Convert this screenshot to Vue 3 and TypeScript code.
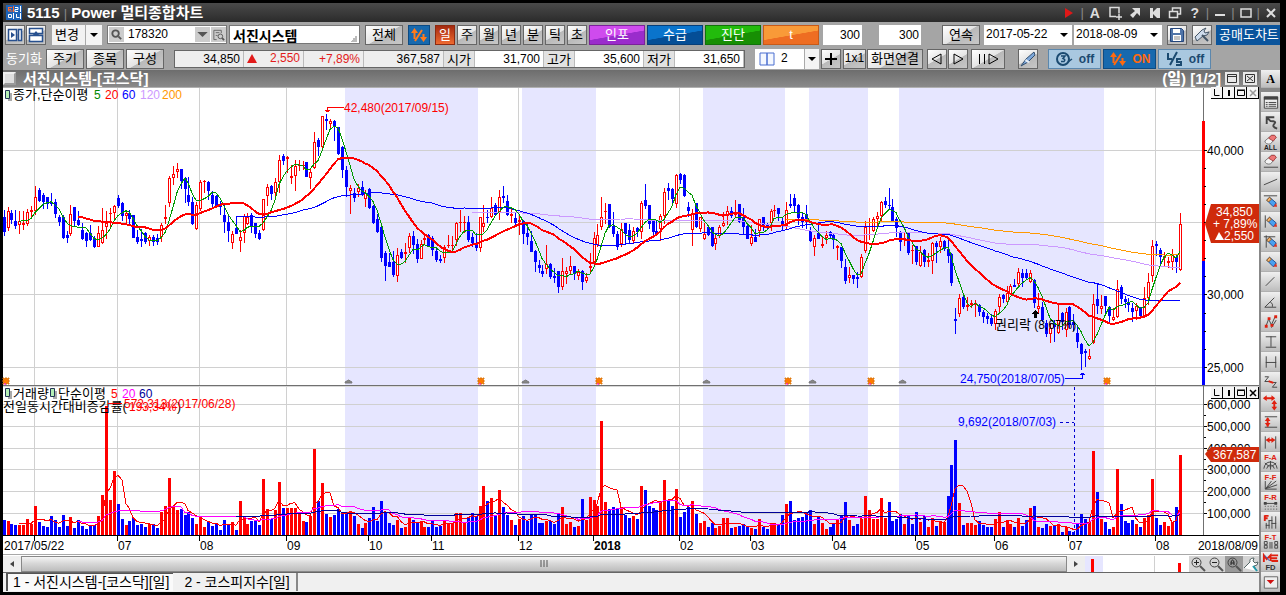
<script setup lang="ts">
import { ref } from 'vue'

interface Part { d: string; s?: string; f?: string; w?: number }
interface Tool { label: string; parts: Part[]; text?: string; color?: string; ty?: number; size?: number }

const STEP = 3.9331
const BASE = 535
const px = (i: number): number => Math.floor(4.1 + STEP * i)

/* direction, high, body top, body bottom, low */
const candleRows = `
b 210 217 232 236|r 207 211 228 231|b 210 213 220 224|b 210 221 226 229|r 211 221 225 234|r 211 223 225 230|r 209 212 224 226|r 206 210 212 217|r 186 197 211 215|b 188 190 201 202
b 193 195 202 209|b 197 197 204 209|b 193 202 204 206|b 199 202 214 218|b 215 217 222 226|b 215 217 238 239|b 231 235 238 243|r 205 214 234 236|b 207 207 221 226|b 211 220 225 226
b 223 230 239 240|b 232 233 241 247|b 225 233 240 241|b 236 239 247 248|r 226 233 247 247|r 208 230 243 244|r 211 223 227 239|r 208 213 214 228|r 205 206 213 219|b 195 198 206 208
b 202 203 216 221|r 210 213 216 224|b 210 213 219 224|b 215 215 238 238|b 230 237 242 244|b 229 239 241 247|b 232 233 242 244|r 235 237 241 246|b 235 237 242 246|b 234 238 242 245
r 223 225 237 242|r 205 217 219 224|r 176 178 203 207|r 166 174 178 185|r 163 169 172 178|b 169 169 181 189|b 177 178 189 203|b 177 195 202 206|b 197 202 224 225|r 202 205 229 230
r 180 182 209 211|r 180 181 182 193|b 181 182 191 200|b 191 195 204 207|b 195 196 207 207|b 201 204 207 215|b 205 215 222 233|b 215 222 231 242|r 231 234 243 249|b 217 228 234 234
r 230 237 241 252|r 214 216 233 243|r 213 217 224 225|b 213 215 226 233|b 223 223 234 238|b 230 233 239 240|r 199 199 230 231|r 184 187 196 206|b 185 186 194 200|r 178 182 193 200
r 155 160 182 193|b 154 156 161 165|r 156 157 159 173|r 165 176 178 184|r 160 166 176 191|r 160 165 166 171|r 161 165 166 170|b 162 162 177 177|r 169 172 178 189|r 132 142 168 169
b 138 140 147 156|r 116 116 147 151|b 114 119 121 130|r 119 121 124 129|b 120 121 127 141|b 127 127 154 155|b 146 147 170 178|b 166 170 187 197|r 185 188 191 214|b 188 193 198 202
r 184 188 192 197|b 181 187 195 196|r 190 193 199 207|b 188 189 208 209|b 205 206 223 224|b 214 219 232 233|b 227 227 258 262|b 251 253 266 281|b 253 262 267 267|b 251 262 275 277
r 248 255 276 282|b 249 252 258 259|r 243 252 254 263|r 233 236 248 253|b 231 236 245 254|b 239 244 259 263|r 240 244 259 259|r 233 238 240 244|b 234 235 246 247|b 236 238 250 256
b 247 251 260 262|b 255 259 261 263|r 245 247 258 263|r 235 245 246 248|r 236 245 246 252|r 222 223 240 246|r 210 222 223 232|r 216 222 223 233|b 216 222 240 242|b 233 237 243 247
b 233 245 248 251|r 217 217 248 252|r 205 223 227 232|b 210 217 218 223|r 197 208 217 218|b 203 205 215 216|r 190 197 213 220|b 186 196 198 203|b 195 201 215 216|r 209 214 216 223
b 213 218 223 226|r 214 220 222 235|b 220 221 234 244|b 223 233 237 245|b 231 241 252 252|b 250 251 262 272|b 260 265 268 273|b 265 271 274 277|r 245 264 269 274|b 263 264 277 279
b 268 276 278 283|b 271 271 287 293|r 258 271 287 290|r 267 271 274 284|r 256 266 271 275|b 266 266 274 280|r 269 272 276 280|b 270 271 282 290|r 273 277 281 283|r 253 266 268 273
r 232 238 262 263|r 224 235 245 247|r 197 217 227 230|r 203 211 212 224|b 204 204 227 228|b 212 226 234 237|b 231 234 247 250|r 223 229 244 247|b 223 223 234 244|b 224 230 240 244
r 227 231 241 243|b 227 228 232 237|r 201 203 232 239|b 184 200 206 209|b 205 205 224 229|b 220 221 232 237|b 221 231 234 236|r 214 216 229 241|r 188 192 216 224|b 183 188 191 200
b 188 189 199 205|r 174 175 204 208|b 173 174 180 184|b 174 175 196 197|b 202 207 211 217|r 209 214 230 246|b 203 203 227 228|r 217 217 229 232|r 223 234 239 240|b 225 227 235 236
b 227 227 246 247|r 234 238 244 250|r 225 227 236 238|r 212 223 226 227|r 206 211 216 225|b 207 211 216 218|r 200 213 215 217|b 204 204 222 223|b 208 217 227 234|b 225 226 239 239
r 225 237 244 246|b 229 237 242 242|r 219 219 231 237|b 217 217 225 231|b 223 224 228 230|r 209 211 223 231|r 205 210 211 217|b 208 208 214 221|b 218 221 226 231|r 202 210 226 230
b 194 204 206 208|b 194 198 206 212|b 204 205 218 225|b 212 217 222 228|b 205 214 220 229|b 227 231 241 242|r 235 238 247 256|b 225 233 239 239|r 237 244 246 248|r 231 235 238 244
b 231 232 236 239|b 234 235 240 249|r 245 246 248 260|b 247 247 261 268|b 259 267 281 284|r 267 275 278 283|b 275 275 279 284|b 272 277 279 288|r 254 257 277 278|r 221 227 251 253
r 218 226 227 240|r 217 219 231 232|r 212 216 219 228|r 201 202 216 222|b 197 201 205 208|b 188 205 206 209|b 199 207 222 222|b 217 219 228 237|b 231 233 242 251|r 232 238 240 246
b 233 233 253 255|r 245 250 251 264|b 246 246 262 265|r 246 252 266 267|b 249 250 262 267|r 253 260 262 267|r 242 243 261 274|b 241 243 247 263|r 237 241 247 253|b 240 241 249 251
b 237 249 256 263|b 253 254 283 286|b 308 319 321 334|r 294 298 314 317|b 296 297 307 309|r 297 305 307 311|r 300 303 305 308|r 300 303 305 317|b 304 305 312 316|b 310 312 317 323
b 313 316 319 324|b 314 318 324 326|r 309 311 324 330|r 294 297 307 314|b 294 295 299 303|r 286 293 302 304|r 284 286 294 295|b 279 285 287 287|r 268 272 284 288|b 269 273 278 287
b 269 273 278 279|r 270 273 282 283|b 279 280 303 308|r 293 306 309 314|b 302 307 320 322|b 320 323 334 337|r 323 328 334 343|b 320 323 327 342|r 303 320 333 334|b 312 313 322 330
r 308 312 330 337|b 306 307 325 328|b 314 322 325 331|b 326 333 342 348|b 343 344 354 370|b 349 351 353 367|r 349 356 359 360|r 294 304 343 344|b 283 299 306 314|r 295 306 309 314
b 296 296 306 314|b 306 307 316 323|r 308 317 320 321|r 280 289 317 318|b 285 287 299 304|b 296 299 302 308|b 298 303 305 312|b 303 308 312 322|r 303 306 311 320|b 307 308 316 318
r 287 298 316 317|r 273 282 298 305|r 240 246 276 282|b 241 244 246 256|b 248 250 257 266|r 252 256 258 266|r 257 261 263 268|r 249 255 262 270|b 255 257 262 273|r 213 224 270 271`

const candles = candleRows.trim().split(/[|\n]/).map((row) => {
  const [dir, h, t, b, l] = row.split(' ')
  return { up: dir === 'r', high: +h, top: +t, bottom: +b, low: +l }
})

/* bar heights; a negative value is a falling-price day */
const volumes = `-15 14 -11 -10 10 10 16 11 29 -13 -9 -8 -19 -15 -8 -20 -9 18 -7 -15 -9 -6 -9 -10 19 40 129 35 64 -31
-16 10 -14 -17 -10 -11 -8 11 -11 -7 23 29 57 28 25 -26 -20 -23 -17 11 18 8 -14 -9 -11 -5 -15 -11 13 -5
34 18 11 -14 -14 -10 56 26 -16 25 53 -27 27 27 27 21 14 -13 19 86 -34 52 -21 18 -20 -26 -22 -23 24 -19
11 -7 12 -17 -28 -14 -34 -23 -12 -10 15 -7 8 18 -15 -12 13 8 -8 -15 -8 -9 15 12 12 22 22 12 -18 -22
-19 29 49 -34 37 -20 45 -28 -20 15 -10 16 -19 -14 -21 -20 -12 -12 14 -14 -11 -21 28 11 13 -8 9 -36 15 38
35 29 114 33 -26 -28 -26 28 -20 -17 19 -16 49 -45 -29 -27 -25 34 55 -34 -29 46 -18 -23 -28 34 -21 12 14 -8
-12 7 9 17 17 -7 8 -9 -11 -8 7 -6 16 -8 -6 12 12 -11 -20 31 -34 -15 -17 -18 -22 -25 11 -19 12 6
-8 -12 16 -20 -33 15 -9 -11 16 39 25 16 16 37 17 -33 -14 -16 -21 11 -20 -11 -23 13 -19 8 17 -9 14 13
-39 -70 -95 32 -10 12 12 10 -14 -10 -8 -8 16 23 -8 15 11 -8 17 -9 -15 27 -29 8 -7 -11 9 -10 11 -3
8 -4 -3 -11 -21 -16 13 84 -43 16 -13 -6 8 66 -31 -14 -12 -15 11 -8 17 20 56 -17 -10 13 9 12 -28 80`
  .trim().split(/\s+/).map(Number)

const rect = (x: number, y: number, w: number, h: number): string => `M${x} ${y}h${w}v${h}h${-w}z`

const candlePath = (up: boolean): string =>
  candles.map((c, i) => c.up !== up ? '' :
    rect(px(i), c.high, 1, Math.max(1, c.low - c.high)) + rect(px(i) - 1, c.top, 3, Math.max(1, c.bottom - c.top))).join('')
const hollow = candles.map((c, i) => c.up && c.bottom - c.top > 2 ? rect(px(i), c.top + 1, 1, c.bottom - c.top - 2) : '').join('')
const volumePath = (up: boolean): string =>
  volumes.map((v, i) => v > 0 !== up ? '' : rect(px(i) - 1, BASE - Math.abs(v), 3, Math.abs(v))).join('')

function average(values: number[], n: number): string {
  const pts: string[] = []
  let sum = 0
  values.forEach((v, i) => {
    sum += v
    if (i >= n) sum -= values[i - n]
    if (i >= n - 1) pts.push(`${px(i)},${(sum / n).toFixed(1)}`)
  })
  return pts.join(' ')
}
const closes = candles.map((c) => (c.up ? c.top : c.bottom))
const volTops = volumes.map((v) => BASE - Math.abs(v))
const priceLines = [
  { n: 200, color: '#ff9900', w: 1 }, { n: 120, color: '#cc99ff', w: 1 }, { n: 60, color: '#0000ff', w: 1 },
  { n: 5, color: '#009900', w: 1 }, { n: 20, color: '#ff0000', w: 2 }
].map((l) => ({ ...l, points: average(closes, l.n) }))
const volumeLines = [
  { n: 5, color: '#ff0000' }, { n: 20, color: '#ff00ff' }, { n: 60, color: '#000099' }
].map((l) => ({ ...l, points: average(volTops, l.n) }))

const bands = [[345, 478], [522, 596], [703, 785], [809, 868], [899, 1104]]
const suns = [6, 481, 599, 788, 871, 1107]
const clouds = [348, 525, 706, 812, 902]
const months = [
  { x: 34, t: '' }, { x: 117, t: '07' }, { x: 199, t: '08' }, { x: 286, t: '09' }, { x: 368, t: '10' },
  { x: 431, t: '11' }, { x: 518, t: '12' }, { x: 593, t: '2018' }, { x: 679, t: '02' }, { x: 750, t: '03' },
  { x: 832, t: '04' }, { x: 915, t: '05' }, { x: 994, t: '06' }, { x: 1068, t: '07' }, { x: 1155, t: '08' }
]
const priceTicks = [{ y: 150, t: '40,000' }, { y: 222, t: '' }, { y: 294, t: '30,000' }, { y: 367, t: '25,000' }]
const volTicks = [
  { y: 404, t: '600,000' }, { y: 426, t: '500,000' }, { y: 448, t: '400,000' },
  { y: 469, t: '300,000' }, { y: 491, t: '200,000' }, { y: 513, t: '100,000' }
]
const minorTicks = [168, 186, 204, 240, 258, 276, 313, 331, 349, 415, 437, 459, 480, 502]

const code = ref('178320')
const stock = ref('서진시스템')
const countA = ref('300')
const countB = ref('300')
const period = ref('일')
const periods = ['일', '주', '월', '년', '분', '틱', '초']
const ads = [{ t: '인포', c: 'purple' }, { t: '수급', c: 'blue' }, { t: '진단', c: 'green' }, { t: 't', c: 'orange' }]
const quotes = [
  { k: '시가', v: '31,700' }, { k: '고가', v: '35,600' }, { k: '저가', v: '31,650' }
]

const R = '#e02010'
const K = '#444'
const pencil = (extra: Part[]): Part[] => [
  { d: 'M6 8l3-3 7 6-3 4z', f: '#4aa0f0', s: '#1c4f9c' },
  { d: 'M6 8l3-3 2 2-3 3z', f: '#f6b26b', s: '#8a5a20' },
  { d: 'M13 15l3-4 1 4z', f: '#e03020' }, ...extra
]
const eraser: Part[] = [
  { d: 'M4 9l7-6q4-1 5 2l-6 7q-5 1-6-3z', f: '#f4f4f4', s: '#777' },
  { d: 'M8 6l3-3q4-1 5 2l-3 4z', f: '#ee7777', s: '#a44' }
]
const tools: Tool[] = [
  { label: '목록', parts: [{ d: 'M3.500 4.500h14v12h-14z', f: '#eee', s: K }, { d: 'M3 6h15', s: K, w: 3 }, { d: 'M5 10.500h2M8 10.500h8M5 12.500h2M8 12.500h8M5 14.500h2M8 14.500h8', s: K }] },
  { label: '되돌리기', parts: [{ d: 'M6 12v-7h8M6 5l4 4q7 0 4 3t3 5', s: K, w: 2 }] },
  { label: '모두 지우기', parts: eraser.map((p) => ({ ...p })), text: 'ALL', color: '#222', ty: 18, size: 7 },
  { label: '지우기', parts: [...eraser, { d: 'M3 15.500h15', s: K }] },
  { label: '추세선', parts: [{ d: 'M3 13l14-6', s: K }] },
  { label: '수평선', parts: pencil([{ d: 'M3 3.500h14', s: K }]) },
  { label: '수직선', parts: pencil([{ d: 'M4.500 3v13', s: K }]) },
  { label: '십자선', parts: pencil([{ d: 'M3 4.500h12M5.500 3v13', s: K }]) },
  { label: '펜', parts: pencil([]) },
  { label: '선', parts: [{ d: 'M5 14l9-9', s: K }] },
  { label: '각도', parts: [{ d: 'M16 15.500h-12l10-10M10 10q3 2 2 5', s: K }] },
  { label: '지그재그', parts: [{ d: 'M5 15l3-8 3 6 4-9M11 16l5-8', s: K }, { d: 'M4 13h3v3h-3zM7 5h3v3h-3zM10 12h3v3h-3zM14 3h3v3h-3z', f: R }] },
  { label: '수직 범위', parts: [{ d: 'M5 4.500h11M5 15.500h11M10.500 4v11', s: K }] },
  { label: '수평 범위', parts: [{ d: 'M5.500 4v12M15.500 4v12M5 10.500h11', s: K }] },
  { label: '파동', parts: [{ d: 'M4 4.500h4l-4 5h5M12 10.500h4l-4 5h5', s: K }, { d: 'M8 9l5 2', s: R, w: 2 }] },
  { label: '이동', parts: [{ d: 'M4 6h9M14 10v7', s: R, w: 2 }, { d: 'M2 6l4-3v6zM15 6l-4-3v6zM14 8l-3 4h6zM14 19l-3-4h6z', f: R }] },
  { label: '상하 폭', parts: [{ d: 'M4 4.500h13M4 15.500h13', s: K }, { d: 'M7 6v9', s: R, w: 2 }, { d: 'M7 5l-3 4h6zM7 15l-3-4h6z', f: R }] },
  { label: '좌우 폭', parts: [{ d: 'M4.500 4v13M15.500 4v13', s: K }, { d: 'M6 8h8', s: R, w: 2 }, { d: 'M5 8l4-3v6zM15 8l-4-3v6z', f: R }] },
  { label: '피보나치 아크', parts: [{ d: 'M3 17q1-7 7-7t7 7M6 17q1-4 4-4t4 4M10 9v9M4 11l5 4M16 11l-5 4', s: K }], text: 'F-A', color: R, ty: 8, size: 8 },
  { label: '피보나치 팬', parts: [{ d: 'M4.500 9v8.500h12M5 17l11-8M5 17l12-4M5 17l6-8', s: K }], text: 'F-F', color: R, ty: 8, size: 8 },
  { label: '피보나치 되돌림', parts: [{ d: 'M3 11.500h14', s: K }, { d: 'M3 10h3v3h-3zM14 10h3v3h-3z', f: K }, { d: 'M4 14.500h1M7 14.500h1M10 14.500h1M13 14.500h1M16 14.500h1M4 17.500h1M7 17.500h1M10 17.500h1M13 17.500h1M16 17.500h1', s: K }], text: 'F-R', color: R, ty: 8, size: 8 },
  { label: '피보나치 막대', parts: [{ d: 'M5.500 11v6M5 13.500h4M8.500 8v9M8 8.500h4M11.500 4v13M11 11.500h5M15.500 4v13', s: K }, { d: 'M4 3v6M4 3.500h4M4 6h3', s: R, w: 2 }] },
  { label: '피보나치 시간대', parts: [{ d: 'M3.500 9.500h3v3h-3zM3.500 13.500h3v3h-3zM9.500 10v7M11.500 10v7M14.500 9.500h3v3h-3zM14.500 13.500h3v3h-3z', s: K }], text: 'F-T', color: R, ty: 8, size: 8 },
  { label: '이동평균', parts: [{ d: 'M3 10v-7l3 4 4-4v6M11 3h7M11 6h6M11 9h7', s: R, w: 2 }, { d: 'M4 3l5 6', s: '#2060d0' }], text: 'FD', color: '#333', ty: 18, size: 8 },
  { label: '더 보기', parts: [{ d: 'M3.500 4.500h14v12h-14z', s: '#666', f: '#eee' }, { d: 'M6 8h8l-4 4z', f: '#d01010' }] }
]
</script>

<template>
  <main class="frame">
    <header class="title">
      <svg class="logo" viewBox="0 0 16 15"><path d="M0 0h16v15h-16z" fill="#1c63b8" /><path d="M2 2.500h4M2.500 2v4h4M2 4.500h3M7.500 1v6" stroke="#ff6a2a" fill="none" /><path d="M9 2.500h3v2h-3v2h3M14.500 1v6M10.500 9v3.500h3M14.500 8v6M2.500 9.500h3v3h-3zM7.500 8v6" stroke="#fff" fill="none" /></svg>
      <h1>5115 <i>|</i> Power 멀티종합차트</h1>
      <nav>
        <button aria-label="재생"><svg viewBox="0 0 14 14"><path d="M3 2l8 5-8 5z" fill="#e01818" /></svg></button>
        <i>|</i>
        <button class="letter">A</button>
        <button aria-label="추가"><svg viewBox="0 0 14 14"><path d="M8 10.500h-6v-9h9v6M11 8v6M8 11h6" stroke="#ddd" fill="none" stroke-width="1.500" /></svg></button>
        <button aria-label="이동"><svg viewBox="0 0 14 14"><path d="M4 2h8v8l-3-3-4 5-3-3 5-4z" fill="#ddd" /></svg></button>
        <button aria-label="처음"><svg viewBox="0 0 14 14"><path d="M2 2h3v4l4-4h3v10h-3l-4-4v4h-3z" fill="#ddd" /></svg></button>
        <button aria-label="복제"><svg viewBox="0 0 14 14"><path d="M4.500 5v-3h8v6h-3M1.500 5.500h8v6h-8z" stroke="#ddd" fill="none" stroke-width="1.500" /></svg></button>
        <button class="letter">?</button>
        <i>|</i>
        <button aria-label="최소화"><svg viewBox="0 0 14 14"><path d="M2 9h10" stroke="#ddd" stroke-width="2" /></svg></button>
        <i>|</i>
        <button aria-label="최대화"><svg viewBox="0 0 14 14"><path d="M2 3h10v8h-10z" stroke="#ddd" stroke-width="1.500" fill="none" /></svg></button>
        <i>|</i>
        <button aria-label="닫기"><svg viewBox="0 0 14 14"><path d="M3 3l8 8M11 3l-8 8" stroke="#ddd" stroke-width="2" /></svg></button>
      </nav>
    </header>

    <section class="bar one">
      <button class="btn sq" aria-label="좌우 분할"><svg viewBox="0 0 16 16"><path d="M1.500 2.500h8v11h-8zM11.500 2.500h3v11h-3z" stroke="#27508f" fill="#fff" stroke-width="1.500" /><path d="M4 5l4 3-4 3z" fill="#27508f" /></svg></button>
      <button class="btn sq" aria-label="상하 분할"><svg viewBox="0 0 16 16"><path d="M1.500 1.500h13v5h-13zM1.500 8.500h13v6h-13z" stroke="#27508f" fill="#fff" stroke-width="1.500" /><path d="M4 9l4-5 4 5z" fill="#27508f" /></svg></button>
      <label class="pick change"><select aria-label="변경"><option>변경</option></select><span class="split"><svg viewBox="0 0 10 10"><path d="M1 3h8l-4 4z" /></svg></span></label>
      <div class="search">
        <button aria-label="검색"><svg viewBox="0 0 14 14"><circle cx="6" cy="6" r="3.500" fill="none" stroke="#555" stroke-width="2" /><path d="M9 9l3 3" stroke="#555" stroke-width="2" /></svg></button>
        <input v-model="code" aria-label="종목코드" />
        <button aria-label="목록 열기"><svg viewBox="0 0 10 10"><path d="M1 3h8l-4 4z" fill="#555" /></svg></button>
        <button aria-label="종목 찾기"><svg viewBox="0 0 14 14"><path d="M5 12.500h-3v-10h8v3M4 5h4M4 8h2" stroke="#666" fill="none" /><circle cx="9" cy="9" r="2.500" stroke="#555" fill="none" /><path d="M11 11l2 2" stroke="#555" stroke-width="2" /></svg></button>
      </div>
      <input v-model="stock" class="name" aria-label="종목명" />
      <button class="btn all">전체</button>
      <button class="swap" aria-label="전환"><svg viewBox="0 0 18 16"><path d="M4.500 12v-8M13.500 7v6M12 3l-7 11" stroke="#ff7a1a" stroke-width="2" fill="none" /><path d="M1 6l3.500-5 3.500 5zM10 10h7l-3.500 5z" fill="#ff7a1a" /></svg></button>
      <div class="periods">
        <button v-for="p in periods" :key="p" class="btn" :class="{ active: p === period }" @click="period = p">{{ p }}</button>
      </div>
      <div class="ads"><button v-for="a in ads" :key="a.t" :class="a.c">{{ a.t }}</button></div>
      <input v-model="countA" class="count" aria-label="표시 개수" />
      <input v-model="countB" class="count wide" aria-label="전체 개수" />
      <button class="btn cont">연속</button>
      <label class="pick date"><select aria-label="시작일"><option>2017-05-22</option></select><span><svg viewBox="0 0 10 10"><path d="M1 3h8l-4 4z" /></svg></span></label>
      <label class="pick date"><select aria-label="종료일"><option>2018-08-09</option></select><span><svg viewBox="0 0 10 10"><path d="M1 3h8l-4 4z" /></svg></span></label>
      <button class="btn sq save" aria-label="저장"><svg viewBox="0 0 16 16"><path d="M1.500 1.500h11l2 2v11h-13z" fill="#4f74a8" stroke="#24467c" /><path d="M4 2h7v4h-7zM4 8h8v6h-8z" fill="#fff" /><path d="M5 10h6M5 12h6" stroke="#888" /></svg></button>
      <button class="btn sq tool" aria-label="설정"><svg viewBox="0 0 16 16"><path d="M1 10l7-7 4-2-2 3 1 2 4-1-2 3-4 1-6 5z" fill="#cfdcec" stroke="#456" /><path d="M8 8l6 6" stroke="#456" stroke-width="2" /></svg></button>
      <button class="short">공매도차트</button>
    </section>

    <section class="bar two">
      <span class="sync">동기화</span>
      <div class="trio"><button class="btn">주기</button><button class="btn">종목</button><button class="btn">구성</button></div>
      <dl class="strip">
        <dd class="w70">34,850</dd><dd class="w60 red up"><svg viewBox="0 0 10 9"><path d="M5 0l5 9h-10z" fill="#e21b1b" /></svg>2,550</dd><dd class="w60 red">+7,89%</dd><dd class="w80">367,587</dd>
        <template v-for="q in quotes" :key="q.k"><dt>{{ q.k }}</dt><dd class="w70 white">{{ q.v }}</dd></template>
      </dl>
      <label class="pick layout"><svg class="pane" viewBox="0 0 16 14"><path d="M1 1h7v12h-7zM8 1h7v12h-7z" fill="#f4f8ff" stroke="#4a6fd0" /></svg><select aria-label="화면 수"><option>2</option></select><span class="split"><svg viewBox="0 0 10 10"><path d="M1 3h8l-4 4z" /></svg></span></label>
      <button class="btn sq plus" aria-label="추가"><svg viewBox="0 0 16 16"><path d="M2 8h12M8 2v12" stroke="#000" stroke-width="2" /></svg></button>
      <button class="btn grid">1x1</button>
      <button class="btn link">화면연결</button>
      <button class="btn sq" aria-label="이전"><svg viewBox="0 0 16 16"><path d="M12 3v10l-9-5z" fill="none" stroke="#000" /></svg></button>
      <button class="btn sq" aria-label="다음"><svg viewBox="0 0 16 16"><path d="M4 3v10l9-5z" fill="none" stroke="#000" /></svg></button>
      <button class="btn play" aria-label="재생"><svg viewBox="0 0 24 16"><path d="M3.500 3v10M8.500 3v10M13 3v10l9-5z" fill="none" stroke="#000" /></svg></button>
      <button class="btn sq pen" aria-label="그리기"><svg viewBox="0 0 16 16"><path d="M1 15l5-7 8-7 1 3-7 7z" fill="#7da7da" stroke="#34506f" /><path d="M6 8l4 3-2 1-3-2z" fill="#e8eef6" /></svg></button>
      <div class="toggles">
        <button><svg viewBox="0 0 18 16"><circle cx="8" cy="8" r="6" fill="none" stroke="#1b4a70" stroke-width="2" /><path d="M6 5h4l-2 2.500q3 1 1 3h-3M13 11l4-3" fill="none" stroke="#1b4a70" stroke-width="1.500" /></svg>off</button>
        <button class="on"><svg viewBox="0 0 18 16"><path d="M4.500 12v-8M13.500 7v6M12 3l-7 11" stroke="#ff6a10" stroke-width="2" fill="none" /><path d="M1 6l3.500-5 3.500 5zM10 10h7l-3.500 5z" fill="#ff6a10" /></svg>ON</button>
        <button><svg viewBox="0 0 18 16"><path d="M3 2v6h4M12 1l-7 13M16 8h-4v3h4v3h-5" fill="none" stroke="#1b4a70" stroke-width="2" /></svg>off</button>
      </div>
    </section>

    <div class="work">
      <div class="content">
        <div class="sub">
          <span class="chip"></span>
          <h2>서진시스템-[코스닥]</h2>
          <b>(일) [1/2]</b>
          <button aria-label="창 최대화"><svg viewBox="0 0 14 13"><path d="M2.500 2.500h9v8h-9zM2.500 4.500h9" fill="none" stroke="#333" /></svg></button>
          <button aria-label="창 닫기"><svg viewBox="0 0 14 13"><path d="M2.500 2.500h9v8h-9zM4 4l6 5M10 4l-6 5" fill="none" stroke="#333" /></svg></button>
        </div>

        <div class="chart">
          <svg viewBox="3 87 1256 469" class="plot" role="img" aria-label="서진시스템 일봉 차트">
            <g shape-rendering="crispEdges">
              <path d="M3 87h1256v469h-1256z" fill="#fff" />
              <path v-for="m in months" :key="m.x" :d="`M${m.x} 87h1v448h-1z`" fill="#d0d0d0" />
              <path v-for="b in bands" :key="b[0]" :d="`M${b[0]} 87H${b[1]}V535H${b[0]}z`" fill="#e6e6ff" />
              <path v-for="t in [...priceTicks, ...volTicks]" :key="t.y" :d="`M3 ${t.y}h1200v1h-1200z`" fill="#d0d0d0" />
              <path d="M3 87h1256v1h-1256z" fill="#b0b0b0" />
              <path :d="volumePath(true)" fill="#f00" /><path :d="volumePath(false)" fill="#00f" />
              <path :d="candlePath(true)" fill="#f00" /><path :d="candlePath(false)" fill="#00f" /><path :d="hollow" fill="#fff" />
              <polyline v-for="l in priceLines" :key="l.n" :points="l.points" fill="none" :stroke="l.color" :stroke-width="l.w" />
              <polyline v-for="l in volumeLines" :key="l.color" :points="l.points" fill="none" :stroke="l.color" />
              <path d="M3 385h1256v1h-1256z" fill="#707070" /><path d="M3 386h1256v1h-1256z" fill="#d8d8d8" />
              <path d="M3 535h1256v1h-1256z" />
              <path v-for="m in months" :key="m.x" :d="`M${m.x} 536h1v5h-1z`" />
              <path d="M1203 88h1v447h-1z" fill="#707070" />
              <path d="M1202 121h3v140h-3z" fill="#f00" /><path d="M1202 261h3v124h-3z" fill="#00f" />
              <path v-for="t in [...priceTicks, ...volTicks]" :key="t.y" :d="`M1204 ${t.y}h3v1h-3z`" />
              <path v-for="y in minorTicks" :key="y" :d="`M1204 ${y}h2v1h-2z`" />
              <path d="M3 554h1256v1h-1256z" fill="#a8a8a8" />
              <path d="M344 107.500h-16.500v4M325 110.500h5M326 111.500h3" stroke="#f00" fill="none" />
              <path d="M1065 378.500h17.500v-6M1080 374.500h5M1081 373.500h3" stroke="#00f" fill="none" />
              <path d="M1034 312h3v6h-3zM1032 314l3.500-4 3.500 4z" />
              <path d="M1074.500 387v148M1060 422.500h14" stroke="#0000d0" stroke-dasharray="3 3" fill="none" />
            </g>
            <g v-for="x in suns" :key="x" :transform="`translate(${x} 381)`">
              <path d="M-3-3h1v1h1v-1h2v1h1v-1h1v1h-1v1h1v2h-1v1h1v1h-1v-1h-1v1h-2v-1h-1v1h-1v-1h1v-1h-1v-2h1v-1h-1z" fill="#b05a00" stroke="#e07a10" /><circle r="2.500" fill="#ff7a00" /><path d="M-2 3h2" stroke="#f0f" />
            </g>
            <path v-for="x in clouds" :key="x" :transform="`translate(${x} 382)`" d="M-3 1q0-2 2-2 2-2 3 0 2 0 2 2z" fill="#888" stroke="#777" />

            <g class="t">
              <g v-for="p in [[5, 90], [5, 388], [50, 388]]" :key="p.join()" :transform="`translate(${p[0]} ${p[1]})`"><path d="M3 3h4v8h-4z" fill="#aaa" /><path d="M.5.5h4v8h-4z" fill="#b5f0b5" stroke="#235" /></g>
              <text x="13" y="99" class="k">종가,단순이평</text>
              <text x="94" y="99" class="g">5</text><text x="105" y="99" class="r">20</text><text x="122" y="99" class="b">60</text><text x="140" y="99" fill="#cc99ff">120</text><text x="162" y="99" fill="#ff9900">200</text>
              <text x="344" y="112" class="r">42,480(2017/09/15)</text>
              <text x="995" y="329"><tspan class="k">권리락</tspan> (8,67%)</text>
              <text x="960" y="383" class="b">24,750(2018/07/05)</text>
              <text x="958" y="426" class="b">9,692(2018/07/03)</text>
              <text x="13" y="398" class="k">거래량</text><text x="58" y="398" class="k">단순이평</text>
              <text x="111" y="398" class="r">5</text><text x="122" y="398" fill="#f0f">20</text><text x="139" y="398" fill="#000099">60</text>
              <text x="3" y="411" class="k">전일동시간대비증감률(</text><text x="129" y="411" class="r">193,34%</text><text x="177" y="411">)</text>
              <path d="M108 403.500h14" stroke="#f00" /><text x="124" y="408" class="r">572,313(2017/06/28)</text>
              <text v-for="t in priceTicks" :key="t.y" x="1207" :y="t.y + 5">{{ t.t }}</text>
              <text v-for="t in volTicks" :key="t.y" x="1207" :y="t.y + 5">{{ t.t }}</text>
              <path d="M1205 224l6-20h48v39h-48z" fill="#cf2a0b" />
              <path d="M1215 240l4-8 5 8z" fill="#fff" />
              <g fill="#fff"><text x="1216" y="216">34,850</text><text x="1213" y="228">+ 7,89%</text><text x="1224" y="240">2,550</text></g>
              <path d="M1205 454l6-7h48v15h-48z" fill="#cf2a0b" /><text x="1213" y="459" fill="#fff">367,587</text>
              <text x="4" y="550">2017/05/22</text>
              <text v-for="m in months" :key="m.x" :x="m.x + 1" y="550" :class="{ bold: m.t === '2018' }">{{ m.t }}</text>
              <text x="1258" y="550" text-anchor="end">2018/08/09</text>
            </g>
          </svg>
          <div v-for="n in 2" :key="n" class="ctl" :class="'c' + n">
            <button aria-label="축소"><svg viewBox="0 0 12 12"><path d="M3.500 2v6.500h5" /></svg></button>
            <button aria-label="막대"><svg viewBox="0 0 12 12"><path d="M6 3v6" stroke-width="2" /></svg></button>
            <button aria-label="확대"><svg viewBox="0 0 12 12"><path d="M2.500 3.500h7v5h-7zM2 3h8" /></svg></button>
            <button aria-label="패널 닫기" :class="{ off: n === 1 }"><svg viewBox="0 0 12 12"><path d="M3 3l6 6M9 3l-6 6" stroke-width="1.500" /></svg></button>
          </div>
        </div>

        <div class="scroll">
          <button aria-label="왼쪽"><svg viewBox="0 0 8 8"><path d="M6 1v6l-4-3z" fill="#444" /></svg></button>
          <div class="thumb" role="scrollbar" aria-label="차트 이동" aria-valuenow="100"><svg viewBox="0 0 9 8"><path d="M1 0v7M4 0v7M7 0v7" stroke="#555" /></svg></div>
          <button aria-label="오른쪽"><svg viewBox="0 0 8 8"><path d="M2 1v6l4-3z" fill="#444" /></svg></button>
          <svg class="mini" viewBox="1086 556 104 16" shape-rendering="crispEdges"><path d="M1086 556h104v16h-104z" fill="#fff" /><path d="M1086 556h18v16h-18z" fill="#e6e6ff" /><path d="M1155 556h1v16h-1z" fill="#d0d0d0" /><path d="M1092 559h3v13h-3zM1179 563h3v9h-3z" fill="#f00" /></svg>
          <button class="z" aria-label="확대"><svg viewBox="0 0 16 16"><circle cx="6.500" cy="6.500" r="4.500" class="lens" /><path d="M10 10l5 5" class="handle" /><path d="M4 6.500h5M6.500 4v5" stroke="#222" /></svg></button>
          <button class="z" aria-label="축소"><svg viewBox="0 0 16 16"><circle cx="6.500" cy="6.500" r="4.500" class="lens" /><path d="M10 10l5 5" class="handle" /><path d="M4 6.500h5" stroke="#222" /></svg></button>
          <button class="z dark" aria-label="자동"><svg viewBox="0 0 16 16"><circle cx="6.500" cy="6.500" r="4.500" class="lens" /><path d="M10 10l5 5" class="handle" /><path d="M5 9v-3q1.500-4 3 0v3M5 7h3" stroke="#222" fill="none" /></svg></button>
          <button class="z" aria-label="설정"><svg viewBox="0 0 16 16"><path d="M1 12l6-6q-1-4 4-4l-1 3 2 2 3-1q0 4-4 4l3 5" fill="#fff" stroke="#566" /><path d="M10 10l4 5" stroke="#29a" stroke-width="2" /></svg></button>
        </div>

        <div class="tabs" role="tablist">
          <button role="tab" aria-selected="true" class="sel">1 - 서진시스템-[코스닥][일]</button>
          <button role="tab" aria-selected="false">2 - 코스피지수[일]</button>
        </div>
      </div>

      <aside>
        <button class="top">A</button>
        <button v-for="t in tools" :key="t.label" :aria-label="t.label">
          <svg viewBox="0 0 20 20">
            <path v-for="(p, i) in t.parts" :key="i" :d="p.d" :stroke="p.s || 'none'" :fill="p.f || 'none'" :stroke-width="p.w || 1" />
            <text v-if="t.text" x="10" :y="t.ty" :fill="t.color" :font-size="t.size" text-anchor="middle">{{ t.text }}</text>
          </svg>
        </button>
      </aside>
    </div>
  </main>
</template>

<style>
body { background: #000; }
</style>

<style scoped>
* { box-sizing: border-box; }
.frame { padding: 3px 6px 3px 3px; background: #000; color: #000; overflow: hidden; font: 13px/15px "Liberation Sans", "Noto Sans CJK KR", sans-serif; }
button, input, select { font: inherit; color: inherit; margin: 0; padding: 0; border: 0; border-radius: 0; background: none; min-width: 0; white-space: nowrap; }
button { display: flex; align-items: center; justify-content: center; flex: none; }
svg { display: block; flex: none; }
h1, h2, dl, dd, dt { margin: 0; }

.title { display: flex; align-items: center; height: 19px; padding-left: 3px; background: linear-gradient(#4a4a4a, #2b2b2b); color: #fff; }
.logo { width: 16px; height: 15px; margin-right: 5px; }
.title h1 { flex: 1; font: bold 15px/19px "Liberation Sans", "Noto Sans CJK KR", sans-serif; white-space: nowrap; }
.title i { font: normal 13px/15px "Liberation Sans", sans-serif; color: #888; }
.title nav { display: flex; align-items: center; gap: 2px; }
.title nav button { width: 18px; height: 16px; color: #ddd; }
.title nav svg { width: 14px; height: 14px; }
.title .letter { font: bold 14px/16px "Liberation Sans", sans-serif; }

.bar { display: flex; align-items: center; background: #a5a5a5; white-space: nowrap; }
.bar > * { flex: none; }
.one { height: 25px; padding-left: 2px; }
.two { height: 23px; padding-left: 3px; }
.btn { height: 20px; border: 1px solid #666; background: linear-gradient(150deg, #fff, #e4e4e4 50%, #b9b9b9 52%, #c8c8c8); }
.sq { width: 20px; margin-right: 1px; }
.sq svg { width: 16px; height: 16px; }
.pick { display: flex; align-items: center; height: 20px; background: #fff; }
.pick select { appearance: none; flex: 1; height: 20px; }
.pick span { display: flex; align-items: center; justify-content: center; width: 17px; height: 20px; }
.pick span svg { width: 10px; height: 10px; }
.pick .split { border-left: 1px solid #aaa; background: #f4f4f4; }
.change { width: 50px; margin: 0 5px; padding-left: 3px; background: #f2f2f2; }
.search { display: flex; align-items: center; width: 120px; height: 19px; background: #fff; border: 1px solid #777; }
.search button { width: 15px; height: 15px; background: #ccc; margin-left: 1px; }
.search button svg { width: 13px; height: 13px; }
.search input { flex: 1; padding-left: 4px; font-size: 12px; }
.name { width: 131px; height: 19px; margin-left: 2px; padding: 0 3px; border: 1px solid #777; background: linear-gradient(135deg, transparent 50%, #bbb 50%) right 2px bottom 1px / 7px 7px no-repeat #fff; font-weight: bold; font-size: 14px; }
.all { width: 38px; margin-left: 5px; }
.swap { width: 22px; height: 20px; margin: 0 5px; background: #1769ae; border: 1px solid #0c4a82; }
.swap svg { width: 18px; height: 16px; }
.periods { display: flex; gap: 2px; }
.periods .btn { width: 20px; }
.periods .active { color: #fff; border-color: #8c2a10; background: linear-gradient(#a52a10, #ee6a30); }
.ads { display: flex; gap: 2px; margin-left: 2px; }
.ads button { width: 56px; height: 20px; color: #fff; border: 1px solid; }
.ads .purple { background: linear-gradient(170deg, #cf4bee 50%, #9a2ccc 52%); border-color: #7a2299; }
.ads .blue { background: linear-gradient(170deg, #0a74cc 50%, #044e96 52%); border-color: #063e78; }
.ads .green { background: linear-gradient(170deg, #22bb0c 50%, #178f04 52%); border-color: #11720a; }
.ads .orange { background: linear-gradient(170deg, #f99a38 50%, #ee6d22 52%); border-color: #c85a18; }
.count { width: 39px; height: 20px; margin-left: 4px; padding-right: 2px; background: #fff; text-align: right; font-size: 12px; }
.wide { width: 42px; margin-left: 17px; }
.cont { width: 38px; margin: 0 4px 0 21px; }
.date { width: 88px; margin-right: 2px; padding-left: 2px; font-size: 12px; }
.save { margin: 0 5px 0 3px; }
.tool { margin-right: 4px; }
.bar .short { flex: 1; height: 20px; justify-content: flex-start; padding-left: 3px; background: #0a549c; color: #fff; }

.sync { width: 40px; color: #fff; }
.trio { display: flex; gap: 2px; margin-right: 10px; }
.trio .btn { width: 38px; }
.strip { display: flex; height: 18px; border: 1px solid #666; background: #eee; line-height: 17px; }
.strip dd, .strip dt { padding: 0 3px; text-align: right; border-right: 1px solid #bbb; }
.strip dd { font-size: 12px; }
.strip dt { width: 31px; background: #e2e2e2; text-align: left; }
.w70 { width: 69px; } .w60 { width: 60px; } .w80 { width: 80px; }
.white { background: #fff; }
.red { color: #e21b1b; }
.up { display: flex; align-items: center; justify-content: space-between; }
.up svg { width: 10px; height: 9px; }
.layout { width: 64px; margin: 0 2px 0 10px; padding-left: 4px; font-size: 12px; }
.pane { width: 16px; height: 14px; margin-right: 6px; }
.layout .split { width: 15px; }
.plus { margin-right: 2px; }
.grid { width: 23px; margin-right: 1px; font-size: 12px; }
.link { width: 56px; margin-right: 4px; }
.play { width: 34px; margin: 0 13px 0 2px; }
.play svg { width: 24px; height: 16px; }
.pen { margin-right: 10px; }
.toggles { display: flex; gap: 2px; }
.toggles button { width: 53px; height: 20px; gap: 6px; border: 1px solid #5b87ad; background: #a9c8e0; color: #1b4a70; font: bold 12px/16px "Liberation Sans", sans-serif; }
.toggles .on { background: #1769ae; color: #ff6a10; border-color: #0c4a82; }
.toggles svg { width: 18px; height: 16px; }

.work { display: flex; }
.content { flex: 1; min-width: 0; }
.sub { display: flex; align-items: center; height: 17px; padding-right: 2px; gap: 4px; background: linear-gradient(#6d6d6d, #8a8a8a); color: #fff; font: bold 15px/17px "Liberation Sans", "Noto Sans CJK KR", sans-serif; }
.sub h2 { flex: 1; font: inherit; }
.chip { width: 13px; height: 13px; margin-right: 3px; border: 2px outset #eee; background: #ddd; }
.sub button { width: 14px; height: 13px; background: #e8e8e8; }
.sub button svg { width: 14px; height: 13px; }
.chart { position: relative; }
.plot { width: 100%; height: auto; overflow: visible; }
.t { font: 12px "Liberation Sans", "Noto Sans CJK KR", sans-serif; }
.k { font-size: 13px; }
.r { fill: #f00; } .b { fill: #00f; } .g { fill: #008800; } .bold { font-weight: bold; }
.ctl { position: absolute; right: 0; display: flex; }
.c1 { top: 0; } .c2 { top: 64%; }
.ctl button { width: 12px; height: 12px; background: #f6f6f6; border-right: 1px solid #000; border-bottom: 1px solid #000; }
.ctl svg { width: 12px; height: 12px; fill: none; stroke: #000; }
.ctl .off svg { stroke: #999; }

.scroll { display: flex; height: 17px; border-bottom: 1px solid #666; background: #eee; }
.scroll button { width: 18px; height: 16px; }
.scroll button svg { width: 8px; height: 8px; }
.thumb { flex: 1; display: flex; align-items: center; justify-content: center; border: 1px solid #888; background: linear-gradient(#f4f4f4, #d8d8d8 45%, #bdbdbd); }
.thumb svg { width: 9px; height: 8px; }
.mini { width: 104px; height: 16px; }
.scroll .z { background: #d4d4d4; }
.scroll .z:last-child { width: 16px; }
.scroll .z svg { width: 16px; height: 16px; }
.scroll .dark { background: #999; }
.lens { fill: none; stroke: #444; }
.handle { stroke: #555; stroke-width: 2; }

.tabs { display: flex; gap: 5px; height: 19px; padding-left: 3px; background: #f0f0f0; font-size: 14px; }
.tabs button { height: 18px; padding: 0 6px; border-right: 2px solid #888; background: #f0f0f0; }
.tabs .sel { padding: 0 4px 0 5px; border: 1px solid #555; border-width: 1px 0 0 2px; background: #fafafa; }

aside { width: 21px; padding-left: 2px; background: #888; }
aside button { width: 19px; height: 20px; background: linear-gradient(#f0f0f0, #bdbdbd); border-bottom: 1px solid #b0b0b0; }
aside button svg { width: 19px; height: 20px; font-family: "Liberation Sans", sans-serif; font-weight: bold; }
aside .top { height: 18px; margin-bottom: 4px; font: bold 12px/16px "Liberation Serif", serif; }
</style>
